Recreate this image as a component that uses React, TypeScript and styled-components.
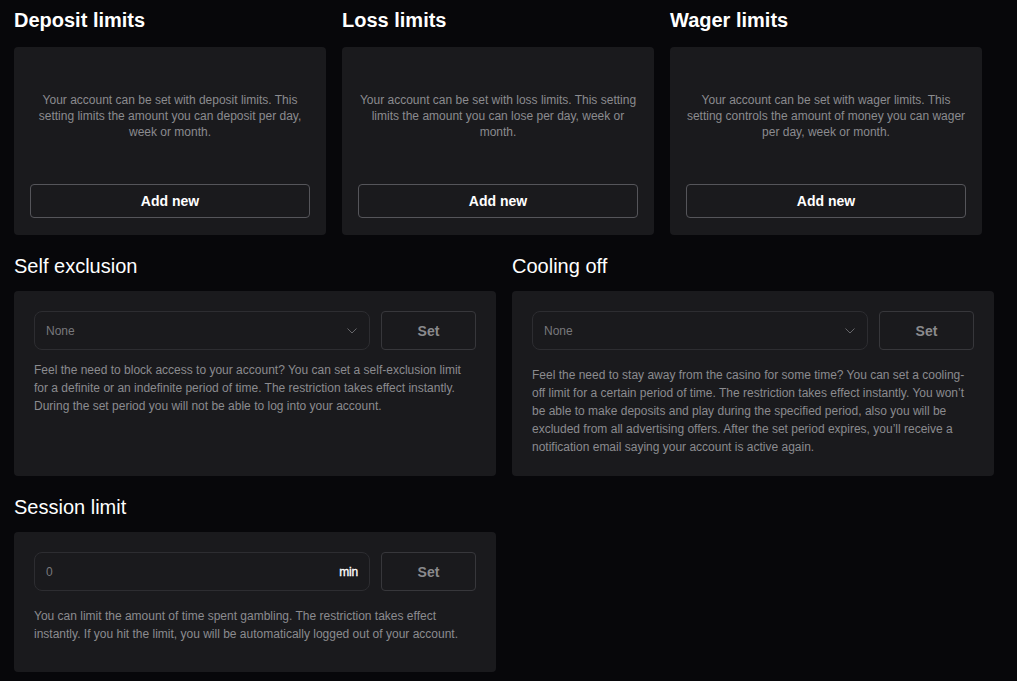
import styled, { createGlobalStyle } from "styled-components";

const GlobalStyle = createGlobalStyle`
    html, body {
        margin: 0;
        padding: 0;
        background-color: #07070a;
        font-family: "Liberation Sans", Arial, sans-serif;
    }
`;

const Page = styled.div`
    min-height: 681px;
    box-sizing: border-box;
    padding: 8px 14px 20px;
    display: flex;
    flex-direction: column;
    gap: 19px;
`;

const TopRow = styled.div`
    display: grid;
    grid-template-columns: repeat(3, 312px);
    column-gap: 16px;
`;

const Row = styled.div`
    display: grid;
    grid-template-columns: repeat(2, 482px);
    column-gap: 16px;
`;

const Section = styled.section`
    display: flex;
    flex-direction: column;
`;

const Title = styled.h2<{ $bold?: boolean }>`
    margin: 0 0 ${(p) => (p.$bold ? 15 : 13)}px;
    font-size: 20px;
    line-height: 24px;
    font-weight: ${(p) => (p.$bold ? 700 : 400)};
    color: #ffffff;
`;

const LimitCard = styled.div`
    height: 188px;
    box-sizing: border-box;
    background-color: #1a1a1d;
    border-radius: 4px;
    padding: 0 16px 17px;
    display: flex;
    flex-direction: column;
`;

const LimitText = styled.p`
    flex: 1;
    margin: 0;
    display: flex;
    align-items: center;
    justify-content: center;
    text-align: center;
    font-size: 12px;
    line-height: 16px;
    color: #8b8b8f;
`;

const AddButton = styled.button`
    height: 34px;
    width: 100%;
    background: transparent;
    border: 1px solid #55555a;
    border-radius: 4px;
    color: #ffffff;
    font-family: inherit;
    font-size: 14px;
    font-weight: 700;
    cursor: pointer;
`;

const Card = styled.div<{ $bottom?: number }>`
    flex: 1;
    background-color: #1a1a1d;
    border-radius: 4px;
    padding: 20px 20px ${(p) => p.$bottom ?? 20}px;
`;

const Controls = styled.div`
    display: flex;
    gap: 11px;
`;

const Field = styled.div`
    flex: 1;
    height: 39px;
    box-sizing: border-box;
    border: 1px solid #2d2d31;
    border-radius: 8px;
    background-color: #1a1a1d;
    display: flex;
    align-items: center;
    justify-content: space-between;
    padding: 0 11px;
    font-size: 12px;
    color: #78787c;
`;

const Unit = styled.span`
    color: #ffffff;
    font-size: 12px;
    margin-right: 0;
    letter-spacing: -0.2px;
    -webkit-text-stroke: 0.3px #ffffff;
`;

const SetButton = styled.button`
    width: 95px;
    height: 39px;
    background: transparent;
    border: 1px solid #37373b;
    border-radius: 4px;
    color: #8a8a8d;
    font-family: inherit;
    font-size: 14px;
    font-weight: 700;
    cursor: pointer;
`;

const Description = styled.p<{ $gap?: number }>`
    margin: ${(p) => p.$gap ?? 16}px 0 0;
    font-size: 12px;
    line-height: 18px;
    color: #8b8b8f;
`;

function Chevron() {
    return (
        <svg width="10" height="6" viewBox="0 0 10 6" fill="none" style={{ marginRight: 1 }}>
            <path d="M0.5 0.5L5 5L9.5 0.5" stroke="#66666a" strokeWidth="1" />
        </svg>
    );
}

const limits = [
    {
        title: "Deposit limits",
        text: "Your account can be set with deposit limits. This setting limits the amount you can deposit per day, week or month.",
    },
    {
        title: "Loss limits",
        text: "Your account can be set with loss limits. This setting limits the amount you can lose per day, week or month.",
    },
    {
        title: "Wager limits",
        text: "Your account can be set with wager limits. This setting controls the amount of money you can wager per day, week or month.",
    },
];

function App() {
    return (
        <>
            <GlobalStyle />
            <Page>
                <TopRow>
                    {limits.map((item) => (
                        <Section key={item.title}>
                            <Title $bold>{item.title}</Title>
                            <LimitCard>
                                <LimitText>{item.text}</LimitText>
                                <AddButton>Add new</AddButton>
                            </LimitCard>
                        </Section>
                    ))}
                </TopRow>
                <Row>
                    <Section>
                        <Title>Self exclusion</Title>
                        <Card>
                            <Controls>
                                <Field>
                                    None
                                    <Chevron />
                                </Field>
                                <SetButton>Set</SetButton>
                            </Controls>
                            <Description $gap={11}>
                                Feel the need to block access to your account? You can set a self-exclusion limit for a
                                definite or an indefinite period of time. The restriction takes effect instantly. During
                                the set period you will not be able to log into your account.
                            </Description>
                        </Card>
                    </Section>
                    <Section>
                        <Title>Cooling off</Title>
                        <Card>
                            <Controls>
                                <Field>
                                    None
                                    <Chevron />
                                </Field>
                                <SetButton>Set</SetButton>
                            </Controls>
                            <Description>
                                Feel the need to stay away from the casino for some time? You can set a cooling-off limit
                                for a certain period of time. The restriction takes effect instantly. You won’t be able to
                                make deposits and play during the specified period, also you will be excluded from all
                                advertising offers. After the set period expires, you’ll receive a notification email
                                saying your account is active again.
                            </Description>
                        </Card>
                    </Section>
                </Row>
                <Row>
                    <Section>
                        <Title>Session limit</Title>
                        <Card $bottom={29}>
                            <Controls>
                                <Field>
                                    0
                                    <Unit>min</Unit>
                                </Field>
                                <SetButton>Set</SetButton>
                            </Controls>
                            <Description>
                                You can limit the amount of time spent gambling. The restriction takes effect instantly.
                                If you hit the limit, you will be automatically logged out of your account.
                            </Description>
                        </Card>
                    </Section>
                </Row>
            </Page>
        </>
    );
}

export default App;
